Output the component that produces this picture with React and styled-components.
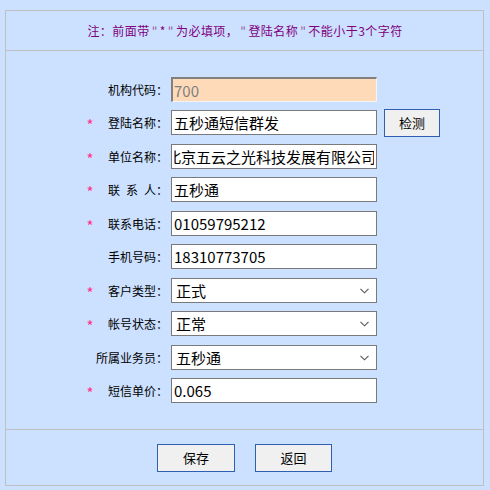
import React from "react";
import styled, { createGlobalStyle } from "styled-components";

const Global = createGlobalStyle`
  html, body { margin: 0; padding: 0; background: #cce0ff; }
  body { font-family: "Noto Sans CJK SC", "Noto Sans", sans-serif; }
`;

const Panel = styled.div`
  margin: 10px 0 0 5px;
  width: 479px;
  height: 476px;
  box-sizing: border-box;
  border: 1px solid #c0c0c0;
  display: flex;
  flex-direction: column;
`;

const Header = styled.div`
  height: 39px;
  border-bottom: 1px solid #c0c0c0;
  display: flex;
  align-items: center;
  justify-content: center;
  color: #800080;
  font-size: 12px;
  letter-spacing: 0.45px;
  padding-left: 1px;
  white-space: pre;
`;

const Mark = styled.span`
  display: inline-block;
  padding: 0 2px;
  color: #9a5aa0;
`;

const Form = styled.div`
  flex: 1;
  display: flex;
  flex-direction: column;
  justify-content: center;
  border-bottom: 1px solid #c0c0c0;
`;

const Row = styled.div`
  height: 33.44px;
  display: flex;
  align-items: center;
  padding-left: 78px;
`;

const Star = styled.span`
  width: 12px;
  color: #ff3388;
  font-size: 15px;
  text-align: center;
  line-height: 1;
  padding-top: 4px;
`;

const Label = styled.span`
  width: 72px;
  text-align: right;
  font-size: 12px;
  color: #000;
  margin-right: 3px;
  white-space: pre;
`;

const TextInput = styled.input`
  box-sizing: border-box;
  width: 206px;
  height: 25px;
  margin: 0;
  padding: 0 2px;
  border: 1px solid #7a7a7a;
  background: #fff;
  font-family: "Noto Sans CJK SC", "Noto Sans", sans-serif;
  font-size: 15px;
  color: #000;
  outline: none;
  &:disabled {
    background: #ffdab9;
    color: #808080;
    border-style: solid;
    border-width: 2px 1px 1px 2px;
    border-color: #808080 #f4f4f4 #f4f4f4 #808080;
    padding-left: 1px;
  }
`;

const SelectWrap = styled.div`
  position: relative;
  width: 206px;
  height: 25px;
`;

const Select = styled.select`
  appearance: none;
  box-sizing: border-box;
  width: 206px;
  height: 25px;
  margin: 0;
  padding: 0 0 0 4px;
  border: 1px solid #7a7a7a;
  background: #fff;
  font-family: "Noto Sans CJK SC", "Noto Sans", sans-serif;
  font-size: 15px;
  color: #000;
  outline: none;
`;

const Chevron = styled.svg`
  position: absolute;
  right: 8px;
  top: 10px;
  pointer-events: none;
`;

const Button = styled.button`
  box-sizing: border-box;
  width: ${(p) => p.$w}px;
  height: 28px;
  margin: 0;
  padding: 0;
  border: 1px solid #2f5fb0;
  background: #f0f0f0;
  font-family: "Noto Sans CJK SC", "Noto Sans", sans-serif;
  font-size: 13px;
  color: #000;
`;

const CheckButton = styled(Button)`
  margin-left: 7px;
`;

const Footer = styled.div`
  height: 55px;
  display: flex;
  align-items: center;
  justify-content: center;
  gap: 20px;
`;

const ScrolledInput = styled(TextInput)`
  text-indent: -8px;
`;

function DropDown({ value }) {
  return (
    <SelectWrap>
      <Select defaultValue={value}>
        <option value={value}>{value}</option>
      </Select>
      <Chevron width="9" height="6" viewBox="0 0 9 6">
        <path d="M0.5 0.8 L4.5 4.8 L8.5 0.8" fill="none" stroke="#555" strokeWidth="1.1" />
      </Chevron>
    </SelectWrap>
  );
}

function Field({ req, label, children }) {
  return (
    <Row>
      <Star>{req ? "*" : ""}</Star>
      <Label>{label}</Label>
      {children}
    </Row>
  );
}

export default function App() {
  return (
    <>
      <Global />
      <Panel>
        <Header>
          注：前面带<Mark>"</Mark>*<Mark>"</Mark>为必填项，<Mark>"</Mark>登陆名称<Mark>"</Mark>不能小于3个字符
        </Header>
        <Form>
          <Field label="机构代码：">
            <TextInput disabled defaultValue="700" />
          </Field>
          <Field req label="登陆名称：">
            <TextInput defaultValue="五秒通短信群发" />
            <CheckButton $w={56}>检测</CheckButton>
          </Field>
          <Field req label="单位名称：">
            <ScrolledInput defaultValue="北京五云之光科技发展有限公司" />
          </Field>
          <Field req label={"联\u2002系\u2002人："}>
            <TextInput defaultValue="五秒通" />
          </Field>
          <Field req label="联系电话：">
            <TextInput defaultValue="01059795212" />
          </Field>
          <Field label="手机号码：">
            <TextInput defaultValue="18310773705" />
          </Field>
          <Field req label="客户类型：">
            <DropDown value="正式" />
          </Field>
          <Field req label="帐号状态：">
            <DropDown value="正常" />
          </Field>
          <Field label="所属业务员：">
            <DropDown value="五秒通" />
          </Field>
          <Field req label="短信单价：">
            <TextInput defaultValue="0.065" />
          </Field>
        </Form>
        <Footer>
          <Button $w={78}>保存</Button>
          <Button $w={77}>返回</Button>
        </Footer>
      </Panel>
    </>
  );
}
